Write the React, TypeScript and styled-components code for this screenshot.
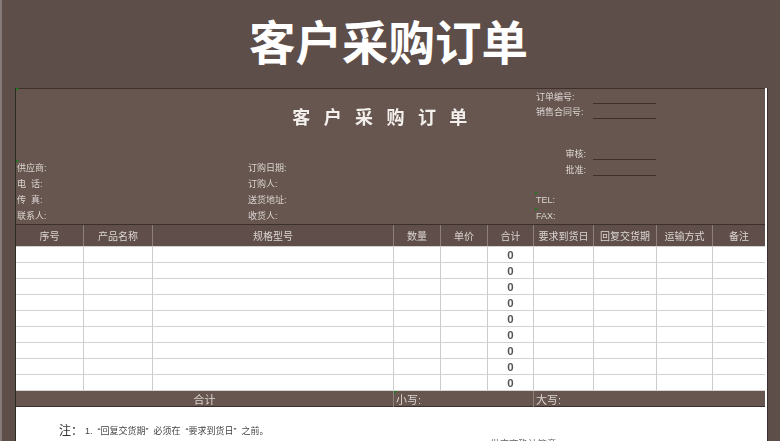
import React from "react";
import styled, { createGlobalStyle } from "styled-components";

const Global = createGlobalStyle`
  html, body { margin: 0; padding: 0; background: #5e4e4a; }
  #root { width: 780px; height: 441px; overflow: hidden; }
  * { box-sizing: border-box; }
`;

const FONT = `"Liberation Sans", "Noto Sans CJK SC", sans-serif`;
const COLS = "68px 69px 241px 47px 47px 46px 60px 63px 56px 52px";

const Page = styled.div`
  width: 780px;
  height: 441px;
  background: #5e4e4a;
  border-left: 2px solid #857a77;
  font-family: ${FONT};
  overflow: hidden;
`;

const PageTitle = styled.h1`
  margin: 0;
  height: 88px;
  padding: 0 5px 7px 0;
  display: flex;
  align-items: center;
  justify-content: center;
  color: #fff;
  font-size: 46.5px;
  font-weight: 700;
  line-height: 1;
  font-family: "Noto Sans CJK SC", sans-serif;
`;

const Sheet = styled.div`
  position: relative;
  margin-left: 13px;
  width: 752px;
  border-left: 1px solid #2e2827;
  border-right: 2px solid #fff;
  box-shadow: 1px 0 0 #3b302d;
  filter: blur(0.3px);
`;

const Form = styled.section`
  display: grid;
  grid-template-columns: 231px 288px 58px 63px 109px;
  grid-template-rows: 15px 15px 25px repeat(5, 16px);
  height: 136px;
  background: #67554f;
  border-top: 1px solid #3e302d;
  color: #dcd6d2;
  font-size: 9px;
`;

const FormTitle = styled.h2`
  grid-column: 1 / 6;
  grid-row: 1 / 4;
  margin: 0 0 2px;
  padding-right: 8px;
  display: flex;
  align-items: center;
  justify-content: center;
  color: #f2efec;
  font-size: 18px;
  font-weight: 700;
  letter-spacing: 13.4px;
  font-family: "Noto Sans CJK SC", sans-serif;
`;

const Field = styled.div<{ $col: number; $row: number; $right?: boolean; $span?: number; $up?: boolean }>`
  position: relative;
  grid-column: ${(p) => p.$col} / span ${(p) => p.$span ?? 1};
  grid-row: ${(p) => p.$row};
  display: flex;
  align-items: center;
  justify-content: ${(p) => (p.$right ? "flex-end" : "flex-start")};
  padding: ${(p) => (p.$right ? "2px 7px 0 1px" : p.$up ? "0 0 2px 1px" : "0 0 0 1px")};
  white-space: pre;
`;

const Underline = styled.div<{ $row: number }>`
  grid-column: 4;
  grid-row: ${(p) => p.$row};
  border-bottom: 1px solid #3f2e2b;
`;

const Marker = styled.i`
  position: absolute;
  left: 0;
  top: 0;
  width: 0;
  height: 0;
  border-top: 3px solid #1c7a1c;
  border-right: 3px solid transparent;
`;

const HeadRow = styled.div`
  display: grid;
  grid-template-columns: ${COLS};
  height: 22px;
  background: #5f4e49;
  border-top: 1px solid #3b302d;
`;

const HeadCell = styled.div`
  display: flex;
  align-items: center;
  justify-content: center;
  color: #dcd6d2;
  font-size: 10px;
  border-right: 1px solid #8d807b;
  white-space: nowrap;
  &:last-child { border-right: 0; }
`;

const BodyRow = styled.div`
  display: grid;
  grid-template-columns: ${COLS};
  height: 16px;
  background: #fff;
  border-top: 1px solid #d2d2d2;
`;

const BodyCell = styled.div`
  display: flex;
  align-items: center;
  justify-content: center;
  border-right: 1px solid #cccccc;
  color: #555;
  font-size: 11.5px;
  font-weight: 700;
  &:last-child { border-right: 0; }
`;

const TotalRow = styled.div`
  display: grid;
  grid-template-columns: 378px 140px 231px;
  height: 17px;
  background: #67554f;
  border-top: 1px solid #d9d5d3;
  border-bottom: 1px solid #3b302d;
  color: #dcd6d2;
  font-size: 11px;
`;

const TotalCell = styled.div<{ $center?: boolean }>`
  position: relative;
  display: flex;
  align-items: center;
  justify-content: ${(p) => (p.$center ? "center" : "flex-start")};
  padding: 0 0 2px ${(p) => (p.$center ? "0" : "2px")};
  border-right: 1px solid #8d807b;
  &:last-child { border-right: 0; }
`;

const Notes = styled.section`
  position: relative;
  height: 40px;
  background: #fff;
  padding: 14px 0 0 43px;
  color: #444;
`;

const NoteLine = styled.div`
  display: flex;
  align-items: center;
  height: 16px;
`;

const NoteLabel = styled.span`
  font-size: 12px;
  width: 26px;
  color: #333;
`;

const NoteText = styled.span`
  font-size: 9px;
  padding-top: 3px;
  white-space: pre;
`;

const Sign = styled.div`
  margin: 1px 0 0 431px;
  font-size: 9.5px;
  line-height: 11px;
  color: #666;
  white-space: nowrap;
`;

const headers = ["序号", "产品名称", "规格型号", "数量", "单价", "合计", "要求到货日", "回复交货期", "运输方式", "备注"];
const rows = Array.from({ length: 9 }, (_, i) => i);

export default function App() {
  return (
    <>
      <Global />
      <Page>
        <PageTitle>客户采购订单</PageTitle>
        <Sheet>
          <Form>
            <FormTitle>客户采购订单</FormTitle>
            <Field $col={3} $row={1} $span={2}>订单编号:</Field>
            <Underline $row={1} />
            <Field $col={3} $row={2} $span={2}>销售合同号:</Field>
            <Underline $row={2} />
            <Field $col={3} $row={4} $right>审核:</Field>
            <Underline $row={4} />
            <Field $col={3} $row={5} $right>批准:</Field>
            <Underline $row={5} />
            <Field $col={1} $row={5} $up><Marker />供应商:</Field>
            <Field $col={2} $row={5} $up>订购日期:</Field>
            <Field $col={1} $row={6} $up>{"电  话:"}</Field>
            <Field $col={2} $row={6} $up>订购人:</Field>
            <Field $col={1} $row={7} $up>{"传  真:"}</Field>
            <Field $col={2} $row={7} $up>送货地址:</Field>
            <Field $col={3} $row={7}><Marker />TEL:</Field>
            <Field $col={1} $row={8} $up>联系人:</Field>
            <Field $col={2} $row={8} $up>收货人:</Field>
            <Field $col={3} $row={8}><Marker />FAX:</Field>
          </Form>
          <Marker />
          <HeadRow>
            {headers.map((h) => (
              <HeadCell key={h}>{h}</HeadCell>
            ))}
          </HeadRow>
          {rows.map((r) => (
            <BodyRow key={r}>
              {headers.map((h) => (
                <BodyCell key={h}>{h === "合计" ? "0" : ""}</BodyCell>
              ))}
            </BodyRow>
          ))}
          <TotalRow>
            <TotalCell $center>合计</TotalCell>
            <TotalCell><Marker />小写:</TotalCell>
            <TotalCell>大写:</TotalCell>
          </TotalRow>
          <Notes>
            <NoteLine>
              <NoteLabel>注：</NoteLabel>
              <NoteText>{"1.  “回复交货期”  必须在  “要求到货日”  之前。"}</NoteText>
            </NoteLine>
            <Sign>供应商确认签章</Sign>
          </Notes>
        </Sheet>
      </Page>
    </>
  );
}
